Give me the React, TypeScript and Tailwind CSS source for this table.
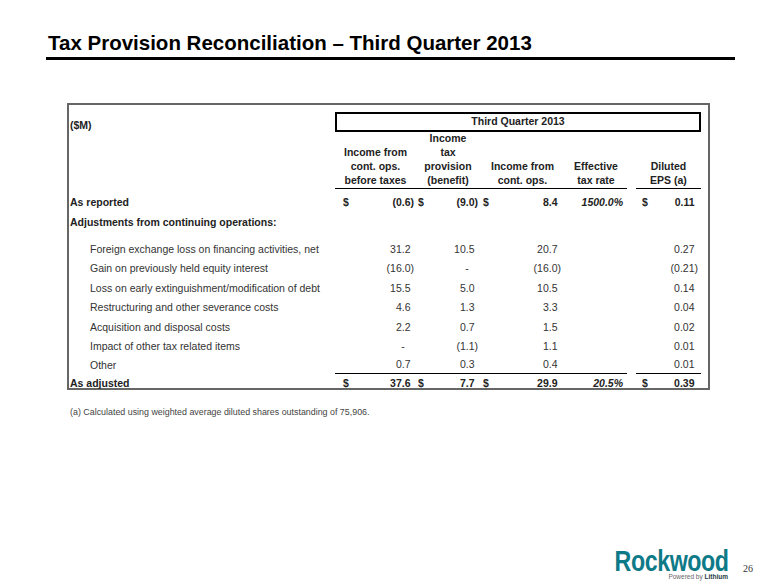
const cols = "grid grid-cols-[266px_81px_64px_85px_62px_9px_65px]";

interface AdjRow {
  label: string;
  pretax: string;
  tax: string;
  net: string;
  eps: string;
}

const adjustments: AdjRow[] = [
  { label: "Foreign exchange loss on financing activities, net", pretax: "31.2", tax: "10.5", net: "20.7", eps: "0.27" },
  { label: "Gain on previously held equity interest", pretax: "(16.0)", tax: "-", net: "(16.0)", eps: "(0.21)" },
  { label: "Loss on early extinguishment/modification of debt", pretax: "15.5", tax: "5.0", net: "10.5", eps: "0.14" },
  { label: "Restructuring and other severance costs", pretax: "4.6", tax: "1.3", net: "3.3", eps: "0.04" },
  { label: "Acquisition and disposal costs", pretax: "2.2", tax: "0.7", net: "1.5", eps: "0.02" },
  { label: "Impact of other tax related items", pretax: "-", tax: "(1.1)", net: "1.1", eps: "0.01" },
];

const other: AdjRow = { label: "Other", pretax: "0.7", tax: "0.3", net: "0.4", eps: "0.01" };

// accounting style: positives leave room for the closing paren, dashes sit further in
function Val({ v }: { v: string }) {
  if (v === "-") {
    return (
      <span>
        -<span className="invisible">0)</span>
      </span>
    );
  }
  if (v.startsWith("(")) return <span>{v}</span>;
  return (
    <span>
      {v}
      <span className="invisible">)</span>
    </span>
  );
}

function Cell({
  v,
  dollar,
  pad,
  line,
}: {
  v: string;
  dollar?: boolean;
  pad: string;
  line?: boolean;
}) {
  return (
    <div className={`flex items-center justify-between ${pad} ${line ? "border-b border-black" : ""}`}>
      <span>{dollar ? "$" : ""}</span>
      <Val v={v} />
    </div>
  );
}

function NumberCells({
  r,
  rate,
  dollar,
  line,
}: {
  r: AdjRow;
  rate?: string;
  dollar?: boolean;
  line?: boolean;
}) {
  return (
    <>
      <Cell v={r.pretax} dollar={dollar} pad="pl-[8px] pr-[2px]" line={line} />
      <Cell v={r.tax} dollar={dollar} pad="pl-[2px] pr-[2px]" line={line} />
      <Cell v={r.net} dollar={dollar} pad="pl-[3px] pr-[4px]" line={line} />
      <div className={`flex items-center justify-end pr-[4px] italic font-bold ${line ? "border-b border-black" : ""}`}>
        {rate}
      </div>
      <div />
      <Cell v={r.eps} dollar={dollar} pad="pl-[6px] pr-[3px]" line={line} />
    </>
  );
}

function Header({ lines }: { lines: string[] }) {
  return (
    <div className="flex flex-col items-center justify-end border-b border-black pb-[1px]">
      {lines.map((l) => (
        <span key={l} className="h-[14px] leading-[14px]">
          {l}
        </span>
      ))}
    </div>
  );
}

function TaxTable() {
  return (
    <div className="ml-[67px] mt-[43px] w-[643px] border-2 border-[#666] text-[10.5px] text-[#333]">
      {/* title row */}
      <div className={`${cols} mt-[7px] h-[19px]`}>
        <div className="pl-[1px] pt-[6px] font-bold leading-[14px] text-[#222]">($M)</div>
        <div className="col-span-6 flex items-center justify-center border-2 border-black font-bold text-[#222]">
          Third Quarter 2013
        </div>
      </div>

      {/* column headings */}
      <div className={`${cols} h-[57px] font-bold text-[#222]`}>
        <div />
        <Header lines={["Income from", "cont. ops.", "before taxes"]} />
        <Header lines={["Income", "tax", "provision", "(benefit)"]} />
        <Header lines={["Income from", "cont. ops."]} />
        <Header lines={["Effective", "tax rate"]} />
        <div />
        <Header lines={["Diluted", "EPS (a)"]} />
      </div>

      <div className={`${cols} mt-[5px] h-[20px] font-bold text-[#222]`}>
        <div className="flex items-center pl-[1px]">As reported</div>
        <NumberCells
          r={{ label: "", pretax: "(0.6)", tax: "(9.0)", net: "8.4", eps: "0.11" }}
          rate="1500.0%"
          dollar
        />
      </div>

      <div className="flex h-[20px] items-center pl-[1px] font-bold text-[#222]">
        Adjustments from continuing operations:
      </div>

      <div className="mt-[7px]">
        {adjustments.map((r) => (
          <div key={r.label} className={`${cols} h-[19.5px]`}>
            <div className="flex items-center pl-[21px]">{r.label}</div>
            <NumberCells r={r} />
          </div>
        ))}
        <div className={`${cols} h-[16px]`}>
          <div className="flex items-center pl-[21px]">{other.label}</div>
          <NumberCells r={other} line />
        </div>
      </div>

      <div className={`${cols} h-[15px] pt-[3px] font-bold text-[#222]`}>
        <div className="flex items-center pl-[1px]">As adjusted</div>
        <NumberCells
          r={{ label: "", pretax: "37.6", tax: "7.7", net: "29.9", eps: "0.39" }}
          rate="20.5%"
          dollar
        />
      </div>
    </div>
  );
}

function Logo() {
  return (
    <div className="flex items-end justify-end pb-[5px] pr-[27px]">
      <div className="flex flex-col items-end">
        <span className="origin-right scale-x-[0.8] text-[29px] font-bold leading-[22px] tracking-[-0.5px] text-[#0e7a88]">
          Rockwood
        </span>
        <span className="mr-[1px] mt-[1px] text-[6.5px] leading-[7px] text-[#666]">
          Powered by <span className="font-bold text-[#1d3c44]">Lithium</span>
        </span>
      </div>
      <span className="mb-[5px] ml-[14px] font-['Liberation_Serif',serif] text-[10px] leading-[12px] text-[#333]">
        26
      </span>
    </div>
  );
}

export default function App() {
  return (
    <div className="flex h-[585px] w-[780px] flex-col bg-white font-['Liberation_Sans',Arial,sans-serif] text-black">
      <h1 className="ml-[48px] mt-[31px] text-[20.5px] font-bold leading-[24px]">
        Tax Provision Reconciliation – Third Quarter 2013
      </h1>
      <div className="ml-[46px] mt-[2px] h-[3px] w-[689px] bg-black" />

      <TaxTable />

      <p className="ml-[70px] mt-[16px] text-[8.9px] leading-[12px] text-[#444]">
        (a) Calculated using weighted average diluted shares outstanding of 75,906.
      </p>

      <div className="mt-auto">
        <Logo />
      </div>
    </div>
  );
}
